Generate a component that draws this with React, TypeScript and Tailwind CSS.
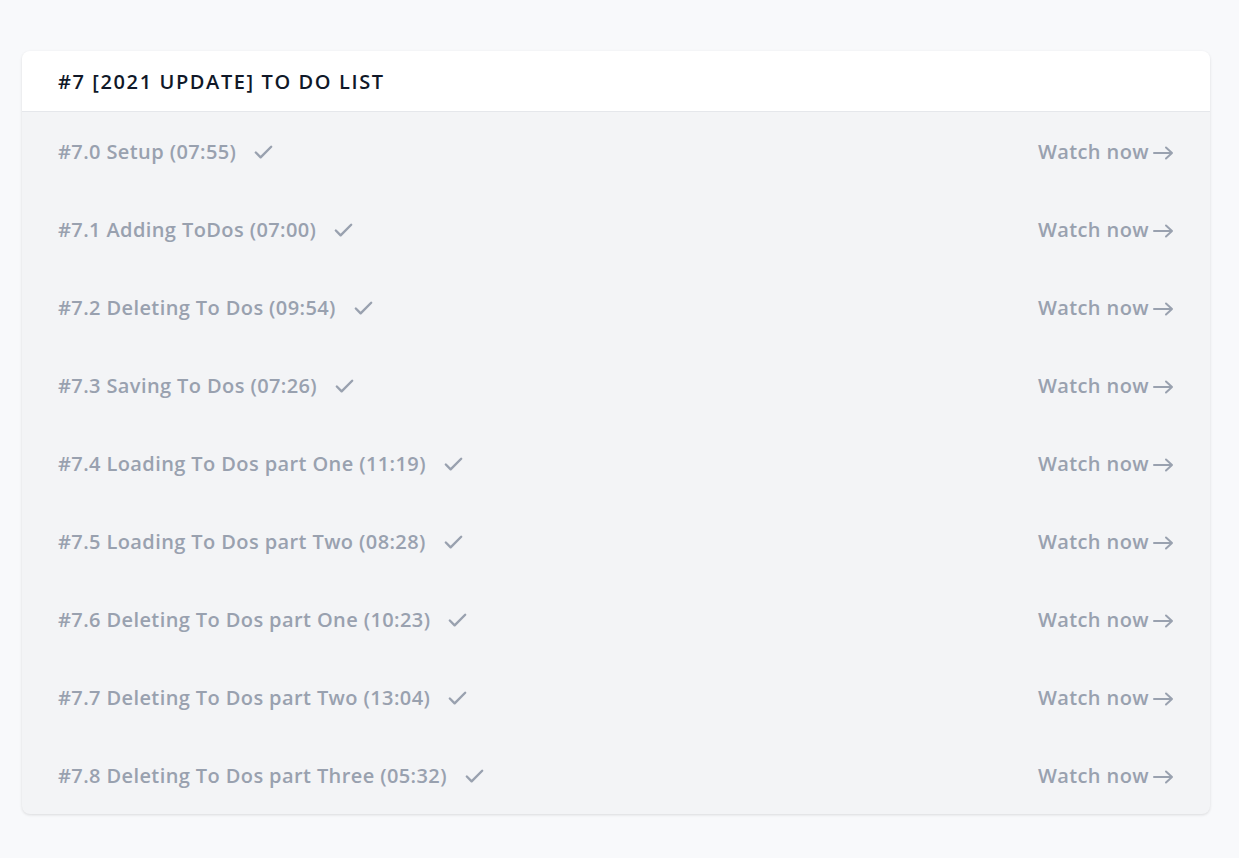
import { Check } from "lucide-react";

const lessons = [
  "#7.0 Setup (07:55)",
  "#7.1 Adding ToDos (07:00)",
  "#7.2 Deleting To Dos (09:54)",
  "#7.3 Saving To Dos (07:26)",
  "#7.4 Loading To Dos part One (11:19)",
  "#7.5 Loading To Dos part Two (08:28)",
  "#7.6 Deleting To Dos part One (10:23)",
  "#7.7 Deleting To Dos part Two (13:04)",
  "#7.8 Deleting To Dos part Three (05:32)",
];

const App = () => {
  return (
    <div
      className="min-h-screen bg-[#f8f9fb] pt-[51px] pl-[22px] pr-[29px]"
      style={{ fontFamily: '"Open Sans", "Noto Sans", sans-serif' }}
    >
      <section className="rounded-lg bg-gray-100 shadow-[0_1px_3px_rgba(0,0,0,0.12)] overflow-hidden">
        <h2 className="h-[61px] flex items-center px-9 pt-[2px] bg-white border-b border-gray-200 text-[20px] font-semibold tracking-[0.08em] uppercase text-gray-900">
          #7 [2021 Update] To Do List
        </h2>
        <ul>
          {lessons.map((l) => (
            <li key={l} className="h-[78px] flex items-center justify-between px-9 pt-[2px] text-[20px] font-semibold text-gray-400">
              <div className="flex items-center gap-4">
                <span className="tracking-[0.02em]">{l}</span>
                <Check className="h-[23px] w-[23px] text-gray-400" strokeWidth={2.5} />
              </div>
              <span className="flex items-center gap-1 tracking-[0.02em]">
                Watch now
                <svg width="21" height="14" viewBox="0 0 21 14" fill="none" stroke="currentColor" strokeWidth="2" strokeLinecap="round" strokeLinejoin="round" className="mt-[1px]">
                  <path d="M1 7h18M13 1.5L19 7l-6 5.5" />
                </svg>
              </span>
            </li>
          ))}
        </ul>
      </section>
    </div>
  );
};

export default App;
